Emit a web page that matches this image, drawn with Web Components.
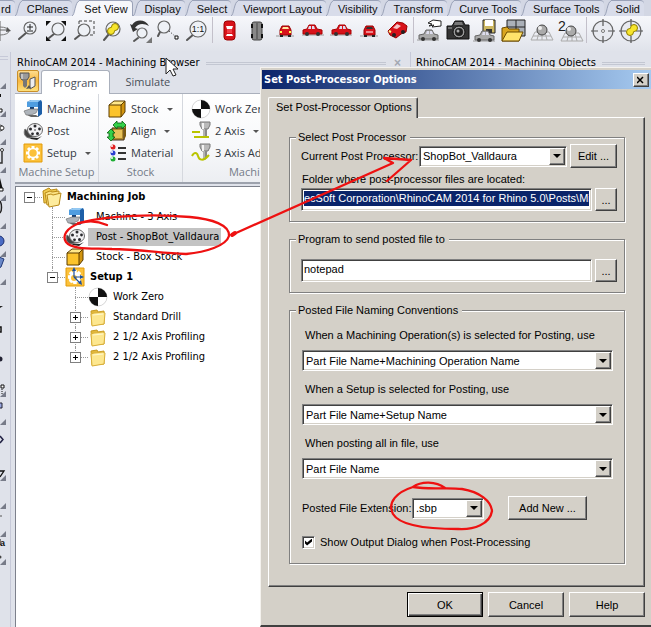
<!DOCTYPE html>
<html lang="en">
<head>
<meta charset="utf-8">
<title>RhinoCAM 2014</title>
<style>
  html, body { margin: 0; height: 100%; }
  body {
    --tahoma: "DejaVu Sans Condensed", "Liberation Sans", sans-serif;
    --segoe: "Open Sans", "Noto Sans", sans-serif;
    --sans: "Liberation Sans", Arial, sans-serif;
    --face: #d4d0c8;
    --chrome: #dfe2ea;
    font: 11px/14px "Liberation Sans", Arial, sans-serif;
    color: #000;
    overflow: hidden;
  }
</style>
</head>
<body>
<rhino-app></rhino-app>

<script>
/* ============ ICONS ============ */
const lens = (x, y, r, hx, hy) => `
  <path d="M${x - 4} ${y + 5}L${hx} ${hy}" stroke="#555" stroke-width="2" stroke-linecap="round"/>
  <circle cx="${x}" cy="${y}" r="${r}" fill="#eef1f6" stroke="#666" stroke-width="1.2"/>`;

const carSide = (c, d) => `
  <path d="M2 17h22" stroke="#999"/>
  <path d="M4 12l5-1 2-4h6l2 4 4 1v4H4z" fill="${c}" stroke="${d}"/>
  <path d="M11 11l1-3h2v3zM15 8h2l1 3h-3z" fill="#dde"/>
  <circle cx="8" cy="16" r="2" fill="#333"/><circle cx="19" cy="16" r="2" fill="#333"/>`;

const mesh = `<path d="M6 14h14l4 8H2zM4 18h18M10 14l-2 8M16 14l2 8M13 14v8" fill="none" stroke="#aaa"/>`;

const target = `
  <circle cx="13" cy="13" r="10" fill="#e8eaf0" stroke="#666" stroke-width="1.2"/>
  <path d="M13 1v7M13 18v7M1 13h7M18 13h7" stroke="#555" stroke-width="1.2"/>`;

const discs = `
  <circle cx="12" cy="14" r="3.500" fill="#f7e52d" stroke="#8d7c00"/>
  <circle cx="16" cy="10" r="3.500" fill="#f7e52d" stroke="#8d7c00"/>
  <path d="M12 14l4-4" stroke="#f7e52d" stroke-width="4"/>`;

const reel = `
  <path d="M5 16l10 1 4-2-5 4-6-1z" fill="#222"/>
  <path d="M2 8c-2 4 0 9 5 9l4-2z" fill="#444" stroke="#777"/>
  <ellipse cx="12" cy="9" rx="7.500" ry="6.500" fill="#f2f2f4" stroke="#666"/>
  <g fill="#2a2a2e"><circle cx="12" cy="5" r="1.500"/><circle cx="16.500" cy="8" r="1.400"/><circle cx="14.500" cy="12.500" r="1.500"/><circle cx="9.500" cy="12.800" r="1.400"/><circle cx="7.500" cy="8" r="1.500"/><circle cx="12" cy="9" r=".8"/></g>`;

const cube = `
  <path d="M2 6l5-4h11l-4 4z" fill="#ffe88a"/><path d="M2 6h12v12H2z" fill="#fbc32c"/><path d="M14 6l4-4v11l-4 5z" fill="#d2950f"/>
  <path d="M2 6l5-4h11v11l-4 5H2zM2 6h12v12M14 6l4-4" fill="none" stroke="#5c3d00"/>`;

const cutter = `
  <path d="M9 1h10v3l-2 4h-6L9 4z" fill="#b9b9b9" stroke="#777"/><path d="M11 2h2v6h-2z" fill="#f2f2f2"/>
  <path d="M12 8h4v7l-2 2-2-2z" fill="#8a8a8a"/><path d="M13 8v7" stroke="#ddd"/>`;

const folder = `
  <path d="M3 4l6-1 1 2 6-1v13L4 18z" fill="#e3b93c" stroke="#c79a20"/>
  <path d="M3 7l3-1 9-1 2 1-1 11-12 2z" fill="#fde78f" stroke="#d9af38"/><path d="M5 8l10-1" stroke="#fff8cf"/>`;

const ICONS = {
  rotate: `<path d="M13 3v20M4 12h18" stroke="#666"/><ellipse cx="13" cy="13" rx="9" ry="4" fill="none" stroke="#777"/><path d="M20 9l4 4-5 1z" fill="#555"/>`,
  zoomDynamic: lens(15, 10, 6, 4, 21) + `<path d="M12 9h6M15 6v6M12 13h6" stroke="#222"/>`,
  zoomExtents: lens(15, 11, 6, 6, 20) + `<path d="M3 3h5L3 8zM23 3v5l-5-5zM3 23v-5l5 5zM23 23h-5l5-5z" fill="#111"/>`,
  zoomWindow: `<path d="M8 3h15v14H8z" fill="none" stroke="#444" stroke-dasharray="3 2"/>` + lens(13, 12, 6, 4, 21),
  zoomSelected: lens(14, 11, 7, 5, 22) + `<g transform="translate(0 -1)">${discs}</g>`,
  undoView: `<path d="M3 6l3 8 5-3-3-1c3-5 9-5 14-2-4-7-13-7-17-1z" fill="#333"/>` + lens(15, 15, 5, 7, 23) + `<path d="M25 19v6h-6z" fill="#777"/>`,
  zoomTarget: lens(9, 9, 6, 3, 18) + `<path d="M14 13l7 6" stroke="#222" stroke-dasharray="1 2"/><path d="M20 18h3v3h-3z" fill="#fff" stroke="#111"/>`,
  zoomOne: lens(15, 11, 8, 4, 22) + `<text x="15" y="14" font-size="9" text-anchor="middle" fill="#111">1:1</text>`,
  carTop: `<rect x="8" y="3" width="11" height="19" rx="3" fill="#d8121a" stroke="#900"/><path d="M10 8h7l-1 3h-5zM10 18h7l-1-2h-5z" fill="#fff"/><path d="M11 11h5v4h-5z" fill="#f04048"/>`,
  carBottom: `<rect x="8" y="4" width="10" height="18" rx="2" fill="#888" stroke="#444"/><path d="M7 6h2v4H7zM17 6h2v4h-2zM7 16h2v4H7zM17 16h2v4h-2z" fill="#111"/><path d="M13 5v16" stroke="#444"/>`,
  carFront: `<path d="M4 18h18" stroke="#999"/><path d="M8 12l2-4h7l2 4v5H8z" fill="#d8121a" stroke="#900"/><path d="M10 11l1-2h5l1 2z" fill="#ffe7a0"/><path d="M8 13h2v2H8zM17 13h2v2h-2z" fill="#ff5"/><path d="M8 17h3v2H8zM16 17h3v2h-3z" fill="#222"/>`,
  carRight: carSide("#d8121a", "#a00"),
  carLeft: `<g transform="matrix(-1 0 0 1 26 0)">${carSide("#d8121a", "#a00")}</g>`,
  carBack: `<path d="M4 18h18" stroke="#999"/><path d="M8 12l2-4h7l2 4v5H8z" fill="#d8121a" stroke="#900"/><path d="M10 11l1-2h5l1 2z" fill="#333"/><path d="M10 14h7" stroke="#fff"/><path d="M8 17h3v2H8zM16 17h3v2h-3z" fill="#222"/>`,
  carPersp: `<path d="M4 13l4-4 5-5 6 1 4 3-1 6-5 2-5 4-6-3z" fill="#d8121a" stroke="#900"/><path d="M9 10l4-4 4 2-4 3z" fill="#f5c6c8"/><circle cx="19" cy="14" r="2" fill="#222"/><circle cx="10" cy="17" r="2" fill="#222"/><path d="M5 13l2 1" stroke="#ff8" stroke-width="2"/>`,
  namedView: `<g transform="translate(-2 5)">${carSide("#aaa", "#666")}</g><path d="M11 5l5-3 8 1v5l-9 1 2-2-5 1 3-2z" fill="#fff" stroke="#222"/>`,
  camera: `<path d="M2 8h5l3-5h8l2 4h4v14H2z" fill="#333" stroke="#111"/><path d="M10 4h7l1 3H9z" fill="#777"/><circle cx="14" cy="14" r="6" fill="#999" stroke="#111"/><circle cx="14" cy="14" r="4" fill="#222"/><circle cx="13" cy="13" r="1.500" fill="#aaa"/><path d="M3 10h4" stroke="#aaa"/>`,
  saveView: `<path d="M10 2h12v13H10z" fill="#cdb862" stroke="#222"/><path d="M12 2h8v6h-8z" fill="#fff"/><path d="M13 11h6v4h-6z" fill="#333"/><g transform="translate(-2 6)">${carSide("#aaa", "#666")}</g>`,
  openView: `<path d="M6 2h18v16H6z" fill="#aab0b8" stroke="#222"/><path d="M15 2v16M6 9h18" stroke="#222"/><path d="M1 23V10l5-1 2 2h10v12z" fill="#d9a51f" stroke="#6b4a00"/><path d="M1 23l5-9h16l-4 9z" fill="#ffe26a" stroke="#6b4a00"/>`,
  cplane: mesh + `<circle cx="13" cy="12" r="5" fill="#aaa" stroke="#444"/><circle cx="11" cy="10" r="2" fill="#eee"/>`,
  cplane2: `<g transform="translate(2 1)">${mesh}<circle cx="12" cy="12" r="5" fill="#aaa" stroke="#444"/><circle cx="10" cy="10" r="2" fill="#eee"/></g><text x="1" y="13" font-size="14" fill="#222">2</text>`,
  target: target + `<circle cx="13" cy="13" r="1.500" fill="#fff" stroke="#777"/>`,
  targetSel: target + discs,

  // 20x20 icons of the ribbon and the job tree
  machine: `<path d="M4 3l4-2h10l1 2v12l-4 3V8H4z" fill="#1d5fa8"/><path d="M4 3h11v5H4z" fill="#4f9de0"/><path d="M4 3l4-2h10l-3 2z" fill="#93c8f2"/><path d="M7 8h4v3H7z" fill="#123f77"/><path d="M1 12l6-2h8l-2 4-5 2H3z" fill="#aeb4bb" stroke="#666" stroke-width=".6"/><path d="M4 16h9l3 2H8z" fill="#666"/>`,
  post: reel,
  setup: `<path d="M1 1h18v18H1z" fill="#fbc13b" stroke="#e49c08"/><path d="M10 3v14M3 10h14M5 5l10 10M15 5L5 15" stroke="#fff" stroke-width="3"/><circle cx="10" cy="10" r="4.500" fill="#fbc13b" stroke="#fff" stroke-width="1.500"/>`,
  setupAxis: `<path d="M1 1h18v18H1z" fill="#fbc13b" stroke="#e49c08"/><path d="M10 3v14M3 10h14M5 5l10 10M15 5L5 15" stroke="#fff" stroke-width="3.500"/><circle cx="9" cy="11" r="4" fill="#fbc13b" stroke="#fff" stroke-width="2"/><path d="M9 10V2M9 10h8M9 10l6 6" stroke="#1c4f9c" stroke-width="1.200"/><path d="M7 4l2-4 2 4zM15 8l4 2-4 2zM13 16l4 2-1-5z" fill="#1c4f9c"/>`,
  stock: cube,
  align: `<path d="M5 7l5-3h9l-2 3z" fill="#eedd88"/><path d="M5 7h12v12H5z" fill="#b08a2c" stroke="#432"/><path d="M7 9h8v8H7z" fill="#e7c25a"/><path d="M17 7l2-3v11l-2 4z" fill="#7a5a10"/><path d="M6 4l4-4v2h5V0l4 4-4 4V6h-5v2z" fill="#35d04a" stroke="#06600f" stroke-width=".8"/><path d="M4 8l4 4H6v4h2l-4 4-4-4h2v-4H0z" fill="#35d04a" stroke="#06600f" stroke-width=".8"/>`,
  material: `<circle cx="6" cy="4" r="2.500" fill="#e02222"/><circle cx="6" cy="10" r="2.500" fill="#2b3fd0"/><circle cx="6" cy="16" r="2.500" fill="#1fae35"/><circle cx="5" cy="3" r="1" fill="#fff"/><circle cx="5" cy="9" r="1" fill="#fff"/><circle cx="5" cy="15" r="1" fill="#fff"/><path d="M11 5h8M11 10h8M11 16h8" stroke="#333" stroke-width="2"/>`,
  workZero: `<circle cx="10" cy="10" r="9" fill="#fff" stroke="#bbb" stroke-width=".6"/><path d="M10 1a9 9 0 0 1 9 9h-9zM10 19a9 9 0 0 1-9-9h9z" fill="#111"/>`,
  axis2: cutter + `<path d="M1 11h8M3 16h15" stroke="#b9c400" stroke-width="2"/>`,
  axis3: cutter + `<path d="M1 13c2-4 5-4 6 0s5 6 11-1" fill="none" stroke="#b9c400" stroke-width="2"/>`,
  folder,
  folders: `<path d="M1 4l6-3 2 2 6-1v13L2 16z" fill="#f0cb50" stroke="#b98a18"/><path d="M3 6l5-2 2 1 7-1v13l-12 1z" fill="#fbe283" stroke="#b98a18"/><path d="M5 8l4-1 2 1 8-2-2 12-10 2z" fill="#fdec9e" stroke="#b98a18"/>`,
  app: `<path d="M2 2h9v4l-2 3H4L2 6z" fill="#9a9a9a" stroke="#555"/><path d="M4 3v5" stroke="#eee"/><path d="M5 9h4v6l-2 2-2-2z" fill="#777"/><path d="M12 8l5-2v9l-5 3z" fill="#eee" stroke="#555"/><path d="M11 14l-3 4 5-1z" fill="#555"/>`
};

class CamIcon extends HTMLElement {
  connectedCallback() {
    const box = this.getAttribute("box") || "20";
    this.attachShadow({ mode: "open" }).innerHTML = `
      <style>
        :host { display: block; flex: none; width: ${box}px; height: ${box}px; }
        svg { display: block; width: 100%; height: 100%; overflow: visible; font-family: var(--sans); }
      </style>
      <svg viewBox="0 0 ${box} ${box}" fill="none" aria-hidden="true">${ICONS[this.getAttribute("name")]}</svg>`;
  }
}

/* ============ TOP TABS ============ */
class MenuTab extends HTMLElement {
  connectedCallback() {
    const selected = this.hasAttribute("selected");
    const fill = selected ? "#f6f7fb" : "#d8dcea";
    const slant = this.hasAttribute("cut") ? "" : `
      <svg width="7" height="16" viewBox="0 0 7 16" aria-hidden="true">
        <path d="M0 16C3 15 3 2 7 1v15z" fill="${fill}"/><path d="M0 16C3 15 3 2 7 1" fill="none" stroke="#9aa2b8"/>
      </svg>`;
    this.attachShadow({ mode: "open" }).innerHTML = `
      <style>
        :host { display: block; flex: none; }
        button {
          display: flex; height: 16px; padding: 0; border: 0; background: none;
          font: inherit; color: #111;
        }
        svg { display: block; }
        span {
          box-sizing: border-box; height: 16px; padding: 0 4px 0 5px; line-height: 16px;
          background: ${fill}; border-top: 1px solid #9aa2b8; border-radius: 0 4px 0 0;
        }
        :host([selected]) span { border-right: 1px solid #9aa2b8; }
        :host([cut]) span { padding-left: 1px; }
      </style>
      <button type="button">${slant}<span><slot></slot></span></button>`;
  }
}

/* ============ TOOLBAR ============ */
class ToolBar extends HTMLElement {
  connectedCallback() {
    const groups = [
      [["rotate", "Rotate view"], ["zoomDynamic", "Zoom dynamic"], ["zoomExtents", "Zoom extents"], ["zoomWindow", "Zoom window"], ["zoomSelected", "Zoom selected"], ["undoView", "Undo view change"], ["zoomTarget", "Zoom target"], ["zoomOne", "Zoom 1 to 1"]],
      [["carTop", "Top view"], ["carBottom", "Bottom view"], ["carFront", "Front view"], ["carLeft", "Left view"], ["carRight", "Right view"], ["carBack", "Back view"], ["carPersp", "Perspective view"]],
      [["namedView", "Named views"], ["camera", "Camera"], ["saveView", "Save view"], ["openView", "Open views"], ["cplane", "Set CPlane"], ["cplane2", "Set two CPlanes"]],
      [["target", "Place target"], ["targetSel", "Target selected"]]
    ];
    this.attachShadow({ mode: "open" }).innerHTML = `
      <style>
        :host { display: block; overflow: hidden; padding-bottom: 6px; background: linear-gradient(#f6f7fb, #e9ebf1 60%, #dfe2ea); }
        .bar { display: flex; height: 30px; margin-left: -14px; align-items: center; }
        .group { display: flex; flex: none; }
        .group + .group::before { content: ""; width: 1px; height: 26px; margin: 0 2px; background: #c3c0ca; }
        button { width: 28px; height: 28px; padding: 0 1px; border: 0; background: none; }
      </style>
      <div class="bar">${groups.map(g => `<div class="group">${g.map(([icon, label]) =>
        `<button type="button" aria-label="${label}"><cam-icon name="${icon}" box="26"></cam-icon></button>`).join("")}</div>`).join("")}
      </div>`;
  }
}

/* ============ LEFT TOOL COLUMN ============ */
class SideTools extends HTMLElement {
  connectedCallback() {
    // [label, drawing, has flyout corner]
    const tools = [
      ["Points", "", 1],
      ["Polyline", `<path d="M0 5h1v3H0z" fill="#111"/><path d="M-1 20h3v3h-3z" fill="#fff" stroke="#111"/>`, 1],
      ["Circle", `<path d="M0 8a3 3 0 0 1 0 6" stroke="#444"/><circle cx="2" cy="11" r="2" fill="#fff" stroke="#333"/>`, 1],
      ["Rectangle", `<path d="M0 18h2V5" stroke="#333" stroke-width="1.500"/><circle cx="2" cy="5" r="1.500" fill="#fff" stroke="#333"/>`, 1],
      ["Cone", `<path d="M-2 17L0 5l3 12z" fill="#111"/><path d="M-1 15h4v3h-4z" fill="#fff" stroke="#111"/>`, 1],
      ["Ellipse", `<path d="M0 0c2 3 2 10 0 12" stroke="#222" stroke-width="1.500"/>`, 1],
      ["Sphere", `<circle cx="-1" cy="12" r="5" fill="#4a6cc4" stroke="#1d2f70"/>`, 1],
      ["Surface", `<path d="M-1 0l5 2-3 8-2 1z" fill="#6a88c8" stroke="#223a78"/>`, 1],
      ["Curve", `<path d="M0 21h3l-3 2z" fill="#222"/>`],
      ["Box edit", `<path d="M-2 14h3v5h-3z" stroke="#111" fill="#fff" stroke-width="1.500"/>`],
      ["Boolean", `<circle cx="0" cy="18" r="2.500" fill="#223"/>`],
      ["Control points", `<path d="M1 16h3v3H1z" fill="#fff" stroke="#111"/><path d="M2 20v6" stroke="#111" stroke-dasharray="1 1"/>`, 1],
      ["Block", `<path d="M-3 6h5v5h-5z" fill="#9aa8e0" stroke="#223"/>`, 1],
      ["Extrude", `<path d="M0 11l3 3.500L0 18" stroke="#224" stroke-width="1.500"/>`],
      ["Trim", `<path d="M0 18h4L0 24" stroke="#111" stroke-width="1.300"/>`, 1],
      ["Join", "", 1],
      ["Split", `<path d="M0 7h2" stroke="#555"/>`, 1],
      ["Text", `<path d="M0 2v6" stroke="#111"/><text x="0" y="9" font-size="9" font-weight="bold" fill="#111">a</text><circle cx="0" cy="20" r="1.500" fill="#444"/>`, 1]
    ];
    this.attachShadow({ mode: "open" }).innerHTML = `
      <style>
        :host { display: block; flex: none; width: 10px; padding-top: 4px; border-right: 1px solid #c6c9d8; background: #dfe2ea; }
        .lines { height: 2px; margin-right: 2px; margin-bottom: 1px; border: solid #c6c9d8; border-width: 1px 0; }
        button { display: block; width: 10px; height: 28px; padding: 0; border: 0; background: none; overflow: hidden; }
        svg { display: block; }
      </style>
      <div class="lines"></div>
      ${tools.map(([label, art, corner]) => `
        <button type="button" aria-label="${label}">
          <svg width="10" height="28" viewBox="0 0 10 28" fill="none" aria-hidden="true">
            ${art}${corner ? `<path d="M6 22v6H0z" fill="#777b88"/>` : ""}
          </svg>
        </button>`).join("")}`;
  }
}

/* ============ DOCKED PANELS ============ */
class DockPanel extends HTMLElement {
  connectedCallback() {
    this.attachShadow({ mode: "open" }).innerHTML = `
      <style>
        :host { display: flex; flex-direction: column; min-width: 0; }
        header { display: flex; align-items: center; gap: 6px; height: 14px; padding: 4px 6px 0 2px; font: 11px/14px var(--tahoma); white-space: nowrap; }
        header::after { content: ""; order: 1; flex: 1; height: 1px; border: solid #c3c7d2; border-width: 1px 0; }
        button { order: 2; padding: 0 2px; border: 0; background: none; color: #a4a8b2; font: bold 12px/12px var(--sans); }
      </style>
      <header><span>${this.getAttribute("heading")}</span>${this.hasAttribute("closable") ? `<button type="button" aria-label="Close panel">×</button>` : ""}</header>
      <slot></slot>`;
  }
}

/* ============ RIBBON ============ */
class RibbonItem extends HTMLElement {
  connectedCallback() {
    this.attachShadow({ mode: "open" }).innerHTML = `
      <style>
        :host { display: block; }
        button {
          display: flex; align-items: center; gap: 4px; height: 22px; padding: 0; border: 0;
          background: none; color: #33383f; font: 11px/14px var(--segoe); white-space: nowrap;
        }
        i { border: 3px solid transparent; border-top-color: #555; border-bottom: 0; margin-left: 4px; }
      </style>
      <button type="button"><cam-icon name="${this.getAttribute("icon")}"></cam-icon><slot></slot>${this.hasAttribute("menu") ? "<i></i>" : ""}</button>`;
  }
}

class RibbonGroup extends HTMLElement {
  connectedCallback() {
    this.attachShadow({ mode: "open" }).innerHTML = `
      <style>
        :host { display: block; flex: none; box-sizing: border-box; padding: 4px 0 2px 8px; border-right: 1px solid #d5d8de; }
        h3 { margin: 0 0 0 -8px; font: 11px/16px var(--segoe); color: #747b88; text-align: center; white-space: nowrap; }
      </style>
      <slot></slot>
      <h3>${this.getAttribute("caption")}</h3>`;
  }
}

class CamRibbon extends HTMLElement {
  connectedCallback() {
    this.attachShadow({ mode: "open" }).innerHTML = `
      <style>
        :host { display: block; }
        nav { display: flex; align-items: flex-start; height: 23px; padding-left: 2px; border-bottom: 1px solid #aab0bc; }
        nav button { height: 24px; padding: 0 16px; border: 0; background: none; color: #4a505a; font: 11px/14px var(--segoe); }
        nav .app { width: 22px; height: 22px; margin-right: 2px; padding: 0; border: 1px solid #c98f2a; border-radius: 2px; background: linear-gradient(#fddc8e, #f9b840 50%, #fde07c); }
        nav .on { padding: 0 11px; border: 1px solid #aab0bc; border-bottom: 0; border-radius: 3px 3px 0 0; background: #fff; }
        .body { display: flex; overflow: hidden; background: linear-gradient(#fff, #f7f8fa 60%, #eceef2); border-bottom: 2px solid #9da2ad; }
        ribbon-group { width: 84px; }
        ribbon-group:last-child { width: 194px; }
      </style>
      <nav>
        <button type="button" class="app" aria-label="Application menu"><cam-icon name="app"></cam-icon></button>
        <button type="button" class="on">Program</button>
        <button type="button">Simulate</button>
      </nav>
      <div class="body">
        <ribbon-group caption="Machine Setup">
          <ribbon-item icon="machine">Machine</ribbon-item>
          <ribbon-item icon="post">Post</ribbon-item>
          <ribbon-item icon="setup" menu>Setup</ribbon-item>
        </ribbon-group>
        <ribbon-group caption="Stock">
          <ribbon-item icon="stock" menu>Stock</ribbon-item>
          <ribbon-item icon="align" menu>Align</ribbon-item>
          <ribbon-item icon="material">Material</ribbon-item>
        </ribbon-group>
        <ribbon-group caption="Machining Methods">
          <ribbon-item icon="workZero">Work Zero</ribbon-item>
          <ribbon-item icon="axis2" menu>2 Axis</ribbon-item>
          <ribbon-item icon="axis3" menu>3 Axis Advanced</ribbon-item>
        </ribbon-group>
      </div>`;
  }
}

/* ============ JOB TREE ============ */
class TreeNode extends HTMLElement {
  connectedCallback() {
    const state = this.getAttribute("state");
    this.attachShadow({ mode: "open" }).innerHTML = `
      <style>
        :host { display: block; position: relative; }
        :host(:not([root]))::before { content: ""; position: absolute; top: 0; bottom: 0; left: 4px; border-left: 1px dotted #999; }
        :host(:not([root]):last-child)::before { bottom: auto; height: 10px; }
        .row { display: flex; align-items: center; height: 20px; white-space: nowrap; }
        .twist { flex: none; width: 9px; height: 11px; }
        button { position: relative; display: block; box-sizing: border-box; width: 11px; height: 11px; margin: 0 -1px; padding: 0; border: 1px solid #808080; background: #fff; }
        button::before, button.plus::after { content: ""; position: absolute; left: 2px; top: 4px; width: 5px; height: 1px; background: #000; }
        button.plus::after { left: 4px; top: 2px; width: 1px; height: 5px; }
        .dots { flex: none; width: 8px; border-top: 1px dotted #999; }
        :host(:not([state])) .dots { width: 13px; margin-left: -5px; }
        .label { margin-left: 3px; padding: 0 2px; }
        :host([leaf]) .label { padding: 0 2px 0 8px; line-height: 18px; }
        :host([selected]) .label { background: #c3c3c3; }
        :host([bold]) .label { font-weight: bold; }
        .kids { margin-left: 23px; font-weight: normal; }
      </style>
      <div class="row">
        <span class="twist">${state ? `<button type="button" class="${state}" aria-label="Toggle ${this.getAttribute("label")}"></button>` : ""}</span>
        <span class="dots"></span>
        <cam-icon name="${this.getAttribute("icon")}"></cam-icon>
        <span class="label">${this.getAttribute("label")}</span>
      </div>
      <div class="kids"><slot></slot></div>`;
  }
}

class JobTree extends HTMLElement {
  connectedCallback() {
    this.attachShadow({ mode: "open" }).innerHTML = `
      <style>
        :host { display: block; flex: 1; margin-top: 2px; padding: 0 9px; background: #fff; border-top: 1px solid #7d818c; border-left: 1px solid #7d818c; font: 11px/14px var(--tahoma); }
      </style>
      <tree-node root bold state="minus" icon="folders" label="Machining Job">
        <tree-node leaf icon="machine" label="Machine - 3 Axis"></tree-node>
        <tree-node leaf selected icon="post" label="Post - ShopBot_Valldaura"></tree-node>
        <tree-node leaf icon="stock" label="Stock - Box Stock"></tree-node>
        <tree-node bold state="minus" icon="setupAxis" label="Setup 1">
          <tree-node icon="workZero" label="Work Zero"></tree-node>
          <tree-node state="plus" icon="folder" label="Standard Drill"></tree-node>
          <tree-node state="plus" icon="folder" label="2 1/2 Axis Profiling"></tree-node>
          <tree-node state="plus" icon="folder" label="2 1/2 Axis Profiling"></tree-node>
        </tree-node>
      </tree-node>`;
  }
}

/* ============ DIALOG CONTROLS ============ */
class WinButton extends HTMLElement {
  connectedCallback() {
    this.attachShadow({ mode: "open" }).innerHTML = `
      <style>
        :host { display: block; flex: none; width: 76px; height: 23px; }
        button {
          display: block; box-sizing: border-box; width: 100%; height: 100%; padding: 0; background: var(--face);
          border: 1px solid; border-color: #fff #404040 #404040 #fff; box-shadow: inset -1px -1px #808080;
          font: 11px/14px var(--sans); color: #000;
        }
        :host([default]) button { border-color: #000; box-shadow: inset 1px 1px #fff, inset -1px -1px #404040, inset -2px -2px #808080; }
      </style>
      <button type="button"><slot></slot></button>`;
  }
}

class WinSelect extends HTMLElement {
  connectedCallback() {
    this.attachShadow({ mode: "open" }).innerHTML = `
      <style>
        :host { display: block; }
        :host([inline]) { display: flex; align-items: center; justify-content: space-between; }
        label { display: block; padding: 0 3px; line-height: 14px; white-space: nowrap; }
        :host([inline]) label { padding: 0; }
        .box { position: relative; height: 21px; margin-top: 8px; }
        :host([inline]) .box { margin: 0; width: var(--box-width); }
        select {
          appearance: none; display: block; box-sizing: border-box; width: 100%; height: 100%; margin: 0; padding: 0 18px 0 3px;
          border: 1px solid; border-color: #808080 #fff #fff #808080; border-radius: 0; box-shadow: inset 1px 1px #404040, inset -1px -1px var(--face);
          background: #fff; color: #000; font: 11px/14px var(--sans);
        }
        .arrow {
          position: absolute; top: 2px; right: 2px; bottom: 2px; width: 16px; box-sizing: border-box; display: grid; place-items: center;
          background: var(--face); border: 1px solid; border-color: #fff #404040 #404040 #fff; box-shadow: inset -1px -1px #808080; pointer-events: none;
        }
        .arrow::before { content: ""; border: 4px solid transparent; border-top-color: #000; border-bottom: 0; }
      </style>
      <label for="field">${this.getAttribute("label")}</label>
      <div class="box">
        <select id="field"><option>${this.getAttribute("value")}</option></select>
        <span class="arrow"></span>
      </div>`;
  }
}

class WinPath extends HTMLElement {
  connectedCallback() {
    const label = this.getAttribute("label");
    const name = this.getAttribute("name");
    this.attachShadow({ mode: "open" }).innerHTML = `
      <style>
        :host { display: block; }
        label { display: block; line-height: 14px; padding: 0 1px; margin-bottom: 2px; }
        .row { display: flex; gap: 3px; height: 23px; }
        input {
          flex: 1; min-width: 0; height: 23px; box-sizing: border-box; padding: 0 1px 4px 2px; border: 1px solid; border-color: #808080 #fff #fff #808080; border-radius: 0;
          box-shadow: inset 1px 1px #404040, inset -1px -1px var(--face); background: #fff; font: 11px/14px var(--sans); color: #000;
        }
        :host([marked]) input { color: #fff; background: linear-gradient(#0a246a, #0a246a) 2px 2px / calc(100% - 4px) 15px no-repeat #fff; }
        win-button { width: 22px; }
      </style>
      ${label ? `<label for="field">${label}</label>` : ""}
      <div class="row">
        <input id="field" type="text" ${label ? "" : `aria-label="${name}"`} value="${this.getAttribute("value")}">
        <win-button>...</win-button>
      </div>`;
  }
}

class WinGroup extends HTMLElement {
  connectedCallback() {
    this.attachShadow({ mode: "open" }).innerHTML = `
      <style>
        :host { display: block; }
        fieldset { margin: 0; padding: 0 7px 10px 11px; border: 1px solid #808080; box-shadow: 1px 1px #fff, inset 1px 1px #fff; min-width: 0; }
        legend { margin-left: -5px; padding: 0 4px 0 2px; background: var(--face); line-height: 14px; }
      </style>
      <fieldset><legend>${this.getAttribute("caption")}</legend><slot></slot></fieldset>`;
  }
}

/* ============ DIALOG ============ */
class PostDialog extends HTMLElement {
  connectedCallback() {
    this.attachShadow({ mode: "open" }).innerHTML = `
      <style>
        :host {
          display: block; box-sizing: border-box; padding: 2px 0 8px 1px; background: var(--face); font: 11px/14px var(--sans);
          border: solid; border-width: 1px 0 2px 1px; border-color: #f4f2ee transparent #404040 #f4f2ee;
        }
        header {
          display: flex; align-items: center; justify-content: space-between; height: 19px; padding: 0 2px 0 2px;
          background: linear-gradient(90deg, #0a246a, #a6caf0); color: #fff; font: bold 11px/14px var(--tahoma);
        }
        header button {
          width: 16px; height: 14px; padding: 0; background: var(--face); border: 1px solid; border-color: #fff #404040 #404040 #fff;
          box-shadow: inset -1px -1px #808080;
        }
        header svg { display: block; margin: 0 auto; }
        .tabs { display: flex; margin: 8px 6px 0 6px; }
        .tab {
          position: relative; height: 21px; margin-bottom: -1px; padding: 0 5px 3px 7px; background: var(--face);
          border: 1px solid; border-color: #fff #404040 var(--face) #fff; border-bottom: 0; border-radius: 2px 2px 0 0; box-shadow: inset -1px 0 #808080;
          box-sizing: border-box; font: 11px/14px var(--sans); color: #000;
        }
        .page {
          display: flex; flex-direction: column; margin: 0 6px 0 6px; padding: 12px 19px 22px 20px;
          border: 1px solid; border-color: #fff #404040 #404040 #fff; box-shadow: inset -1px -1px #808080;
        }
        win-group + win-group { margin-top: 10px; }
        .current { display: flex; gap: 3px; align-items: center; height: 24px; margin-bottom: 4px; }
        .current win-select { flex: 1; --box-width: 148px; }
        .current win-button { width: 47px; height: 24px; }
        .program { padding-top: 13px; }
        .naming { padding: 11px 4px 4px 1px; }
        .naming win-select + win-select { margin-top: 11px; }
        .ext { display: flex; align-items: center; gap: 24px; height: 24px; margin-top: 17px; }
        .ext win-select { width: 182px; --box-width: 72px; }
        .ext win-button { width: 79px; height: 24px; }
        .check { display: flex; align-items: center; gap: 5px; margin-top: 15px; height: 14px; }
        input {
          appearance: none; box-sizing: border-box; width: 13px; height: 13px; margin: 0; background: #fff;
          border: 1px solid; border-color: #808080 #fff #fff #808080; box-shadow: inset 1px 1px #404040, inset -1px -1px var(--face);
          display: grid; place-items: center;
        }
        input:checked::before { content: ""; width: 7px; height: 7px; background: #000; clip-path: polygon(0 28%, 0 72%, 30% 100%, 100% 43%, 100% 0, 30% 57%); }
        footer { display: flex; justify-content: flex-end; gap: 5px; margin: 5px 6px 0 0; }
        footer win-button { height: 25px; }
      </style>
      <header>
        Set Post-Processor Options
        <button type="button" aria-label="Close">
          <svg width="8" height="8" viewBox="0 0 8 8"><path d="M0 1l6 6M6 1L0 7" stroke="#000" stroke-width="1.500"/></svg>
        </button>
      </header>
      <div class="tabs"><button type="button" class="tab">Set Post-Processor Options</button></div>
      <div class="page">
        <win-group caption="Select Post Processor">
          <div class="current">
            <win-select inline label="Current Post Processor:" value="ShopBot_Valldaura"></win-select>
            <win-button>Edit ...</win-button>
          </div>
          <win-path marked label="Folder where post-processor files are located:" value="ecSoft Corporation\\RhinoCAM 2014 for Rhino 5.0\\Posts\\Mil"></win-path>
        </win-group>
        <win-group caption="Program to send posted file to">
          <div class="program"><win-path name="Program" value="notepad"></win-path></div>
        </win-group>
        <win-group caption="Posted File Naming Conventions">
          <div class="naming">
            <win-select label="When a Machining Operation(s) is selected for Posting, use" value="Part File Name+Machining Operation Name"></win-select>
            <win-select label="When a Setup is selected for Posting, use" value="Part File Name+Setup Name"></win-select>
            <win-select label="When posting all in file, use" value="Part File Name"></win-select>
            <div class="ext">
              <win-select inline label="Posted File Extension:" value=".sbp"></win-select>
              <win-button>Add New ...</win-button>
            </div>
            <div class="check"><input type="checkbox" id="show" checked><label for="show">Show Output Dialog when Post-Processing</label></div>
          </div>
        </win-group>
      </div>
      <footer>
        <win-button default>OK</win-button>
        <win-button>Cancel</win-button>
        <win-button>Help</win-button>
      </footer>`;
  }
}

/* ============ RED PEN MARKS AND POINTER ============ */
class PenMarks extends HTMLElement {
  connectedCallback() {
    this.attachShadow({ mode: "open" }).innerHTML = `
      <style>
        :host { display: block; pointer-events: none; }
        svg { display: block; width: 651px; height: 627px; }
      </style>
      <svg viewBox="0 0 651 627" fill="none" aria-hidden="true">
        <g stroke="#ee1111" stroke-width="2.300" stroke-linecap="round" stroke-linejoin="round">
          <path d="M107 225C98 221 90 220 80 223C66 228 62 236 66 242C72 250 92 248 112 249C138 249 160 253 186 254C206 252 226 246 229 236C230 225 212 219 190 217C155 214 110 215 78 223"/>
          <path d="M232 235l4-2L393 163L384 158L411 160L387 181" />
          <path d="M232 235l3-2" stroke-width="4"/>
          <path d="M413 487C421 481 436 481 445 488M413 487C430 490 448 487 462 489C480 492 491 501 492 511C490 524 474 530 458 529C430 529 400 526 393 514C387 502 397 492 413 487"/>
        </g>
        <path d="M166 58v16l4-4 3 6 3-1-3-6h5z" fill="#fff" stroke="#222"/>
      </svg>`;
  }
}

/* ============ APPLICATION ============ */
class RhinoApp extends HTMLElement {
  connectedCallback() {
    this.attachShadow({ mode: "open" }).innerHTML = `
      <style>
        :host { position: relative; display: flex; flex-direction: column; min-height: 100vh; background: var(--chrome); overflow: hidden; }
        .menu { display: flex; flex: none; height: 16px; overflow: hidden; background: #d3d7e4; }
        main { display: flex; flex: 1; }
        .browser { flex: 0 0 394px; margin-left: 4px; }
        .objects { flex: 1; border-left: 1px solid #c6c9d8; margin-left: 1px; padding-left: 3px; }
        post-dialog { position: absolute; top: 67px; left: 260px; right: 0; }
        pen-marks { position: absolute; top: 0; left: 0; }
      </style>
      <div class="menu">
        <menu-tab cut>rd</menu-tab><menu-tab>CPlanes</menu-tab><menu-tab selected>Set View</menu-tab><menu-tab>Display</menu-tab>
        <menu-tab>Select</menu-tab><menu-tab>Viewport Layout</menu-tab><menu-tab>Visibility</menu-tab><menu-tab>Transform</menu-tab>
        <menu-tab>Curve Tools</menu-tab><menu-tab>Surface Tools</menu-tab><menu-tab>Solid</menu-tab>
      </div>
      <tool-bar></tool-bar>
      <main>
        <side-tools></side-tools>
        <dock-panel class="browser" heading="RhinoCAM 2014 - Machining Browser" closable>
          <cam-ribbon></cam-ribbon>
          <job-tree></job-tree>
        </dock-panel>
        <dock-panel class="objects" heading="RhinoCAM 2014 - Machining Objects"></dock-panel>
      </main>
      <post-dialog></post-dialog>
      <pen-marks></pen-marks>`;
  }
}

customElements.define("cam-icon", CamIcon);
customElements.define("menu-tab", MenuTab);
customElements.define("tool-bar", ToolBar);
customElements.define("side-tools", SideTools);
customElements.define("dock-panel", DockPanel);
customElements.define("ribbon-item", RibbonItem);
customElements.define("ribbon-group", RibbonGroup);
customElements.define("cam-ribbon", CamRibbon);
customElements.define("tree-node", TreeNode);
customElements.define("job-tree", JobTree);
customElements.define("win-button", WinButton);
customElements.define("win-select", WinSelect);
customElements.define("win-path", WinPath);
customElements.define("win-group", WinGroup);
customElements.define("post-dialog", PostDialog);
customElements.define("pen-marks", PenMarks);
customElements.define("rhino-app", RhinoApp);
</script>
</body>
</html>
